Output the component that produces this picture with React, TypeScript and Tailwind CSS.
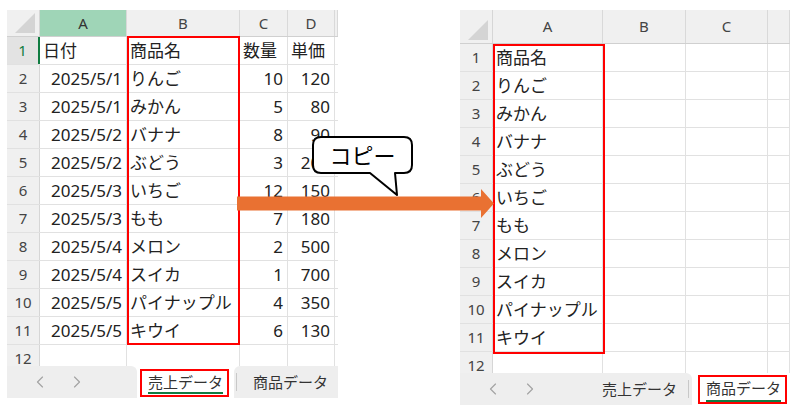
import React from 'react';
import { ChevronLeft, ChevronRight } from 'lucide-react';

type Col = { label: string; w: string; active?: boolean };

const leftCols: Col[] = [
  { label: 'A', w: 'w-[87px]', active: true },
  { label: 'B', w: 'w-[113px]' },
  { label: 'C', w: 'w-[48px]' },
  { label: 'D', w: 'w-[47px]' },
  { label: '', w: 'w-[3px]' },
];

const rightCols: Col[] = [
  { label: 'A', w: 'w-[110px]' },
  { label: 'B', w: 'w-[83px]' },
  { label: 'C', w: 'w-[82px]' },
  { label: '', w: 'w-[22px]' },
];

const sales: string[][] = [
  ['日付', '商品名', '数量', '単価'],
  ['2025/5/1', 'りんご', '10', '120'],
  ['2025/5/1', 'みかん', '5', '80'],
  ['2025/5/2', 'バナナ', '8', '90'],
  ['2025/5/2', 'ぶどう', '3', '200'],
  ['2025/5/3', 'いちご', '12', '150'],
  ['2025/5/3', 'もも', '7', '180'],
  ['2025/5/4', 'メロン', '2', '500'],
  ['2025/5/4', 'スイカ', '1', '700'],
  ['2025/5/5', 'パイナップル', '4', '350'],
  ['2025/5/5', 'キウイ', '6', '130'],
  [],
];

const products: string[][] = [
  ...sales.slice(0, 11).map(r => [r[1]]),
  [],
];

const isNum = (v: string) => /^[\d/]+$/.test(v);

function Corner() {
  return (
    <div className="relative h-full w-[33px] shrink-0 bg-[#f0f0f0] border-r border-[#d6d6d6]">
      <svg className="absolute right-[4px] bottom-[3px]" width="20" height="20" viewBox="0 0 20 20">
        <polygon points="20,0 20,20 0,20" fill="#d4d4d4" />
      </svg>
    </div>
  );
}

function Sheet({
  cols,
  rows,
  headH,
  gridH,
  activeRow,
  box,
  tabs,
}: {
  cols: Col[];
  rows: string[][];
  headH: string;
  gridH: string;
  activeRow?: number;
  box: string;
  tabs: React.ReactNode;
}) {
  return (
    <div className="flex flex-col">
      <div className={`relative overflow-hidden ${gridH}`}>
        {/* column headers */}
        <div className={`flex ${headH} border-b border-[#d0d0d0]`}>
          <Corner />
          {cols.map((c, i) => (
            <div
              key={i}
              className={`${c.w} shrink-0 h-full flex items-center justify-center text-[15px] border-r border-[#d9d9d9] ${
                c.active ? 'bg-[#9fd5b7] text-[#333]' : 'bg-[#f0f0f0] text-[#444]'
              }`}
            >
              {c.label}
            </div>
          ))}
        </div>

        {/* rows */}
        {rows.map((r, ri) => {
          const on = activeRow === ri + 1;
          return (
            <div key={ri} className="flex h-[28px] border-b border-[#e1e1e1]">
              <div
                className={`w-[33px] shrink-0 h-full flex items-center justify-center text-[15px] ${
                  on
                    ? 'bg-[#e3e3e3] text-[#107c41] border-r-2 border-[#107c41]'
                    : 'bg-[#f0f0f0] text-[#444] border-r border-[#d6d6d6]'
                }`}
              >
                {ri + 1}
              </div>
              {cols.map((c, ci) => {
                const v = r[ci] ?? '';
                const num = ri > 0 && isNum(v);
                return (
                  <div
                    key={ci}
                    className={`${c.w} shrink-0 h-full flex items-center whitespace-nowrap text-[17px] text-[#222] border-r border-[#e1e1e1] ${
                      num ? 'justify-end pr-[4px]' : 'pl-[3px]'
                    }`}
                  >
                    {v}
                  </div>
                );
              })}
            </div>
          );
        })}

        {/* highlight box */}
        <div className={`absolute border-2 border-[#ff0000] ${box}`} />
      </div>
      {tabs}
    </div>
  );
}

function Arrows() {
  return (
    <div className="flex items-center pl-[23px] gap-[17px] text-[#a3a3a3]">
      <ChevronLeft size={20} strokeWidth={1.4} />
      <ChevronRight size={20} strokeWidth={1.4} />
    </div>
  );
}

function ActiveTab({ label, h, lineH }: { label: string; h: string; lineH: string }) {
  return (
    <div className={`border-2 border-[#ff0000] ${h} w-[89px] pl-[6px]`}>
      <span className={`block w-[75px] ${lineH} border-b-2 border-[#107c41] text-[15px] text-[#333]`}>
        {label}
      </span>
    </div>
  );
}

export default function App() {
  return (
    <div className="relative w-[795px] h-[411px] bg-white overflow-hidden font-['Noto_Sans','Noto_Sans_CJK_JP',sans-serif]">
      <div className="flex pt-[10px] pl-[7px]">
        {/* 売上データ sheet */}
        <div className="w-[331px]">
          <Sheet
            cols={leftCols}
            rows={sales}
            headH="h-[27px]"
            gridH="h-[356px]"
            activeRow={1}
            box="left-[120px] top-[26px] w-[113px] h-[309px]"
            tabs={
              <div className="flex h-[32px]">
                <div className="w-[130px] bg-[#eeeeee] rounded-tr-[6px] flex items-center">
                  <Arrows />
                </div>
                <div className="w-[97px] bg-white pt-[3px] pl-[3px]">
                  <ActiveTab label="売上データ" h="h-[28px]" lineH="h-[23px] leading-[22px]" />
                </div>
                <div className="flex-1 bg-[#eeeeee] rounded-tl-[6px] flex items-center">
                  <div className="ml-[2px] w-px h-[18px] bg-[#c8c8c8]" />
                  <span className="ml-[16px] text-[15px] text-[#333]">商品データ</span>
                </div>
              </div>
            }
          />
        </div>

        {/* 商品データ sheet */}
        <div className="w-[330px] ml-[122px]">
          <Sheet
            cols={rightCols}
            rows={products}
            headH="h-[34px]"
            gridH="h-[363px]"
            box="left-[33px] top-[34px] w-[112px] h-[310px]"
            tabs={
              <div className="flex h-[32px]">
                <div className="w-[232px] bg-[#eeeeee] rounded-tr-[6px] flex items-center">
                  <Arrows />
                  <span className="ml-[62px] text-[15px] text-[#333]">売上データ</span>
                  <div className="ml-[11px] w-px h-[18px] bg-[#c8c8c8]" />
                </div>
                <div className="flex-1 bg-white pt-[2px] pl-[6px]">
                  <ActiveTab label="商品データ" h="h-[29px]" lineH="h-[25px] leading-[23px]" />
                </div>
              </div>
            }
          />
        </div>
      </div>

      {/* copy arrow */}
      <svg className="absolute left-[237px] top-[189px]" width="257" height="29" viewBox="0 0 257 29">
        <polygon points="0,7.5 244,7.5 244,0 257,14.5 244,29 244,21.5 0,21.5" fill="#e97132" />
      </svg>

      {/* callout */}
      <svg className="absolute left-[311px] top-[135px]" width="104" height="62" viewBox="0 0 104 62">
        <path
          d="M10,2 H93 Q101,2 101,10 V30 Q101,38 93,38 H84 L86,60 L59,38 H10 Q2,38 2,30 V10 Q2,2 10,2 Z"
          fill="#ffffff"
          stroke="#000000"
          strokeWidth="2"
          strokeLinejoin="round"
        />
      </svg>
      <div className="absolute left-[313px] top-[137px] w-[99px] h-[36px] flex items-center justify-center text-[22px] text-black leading-none">
        コピー
      </div>
    </div>
  );
}
